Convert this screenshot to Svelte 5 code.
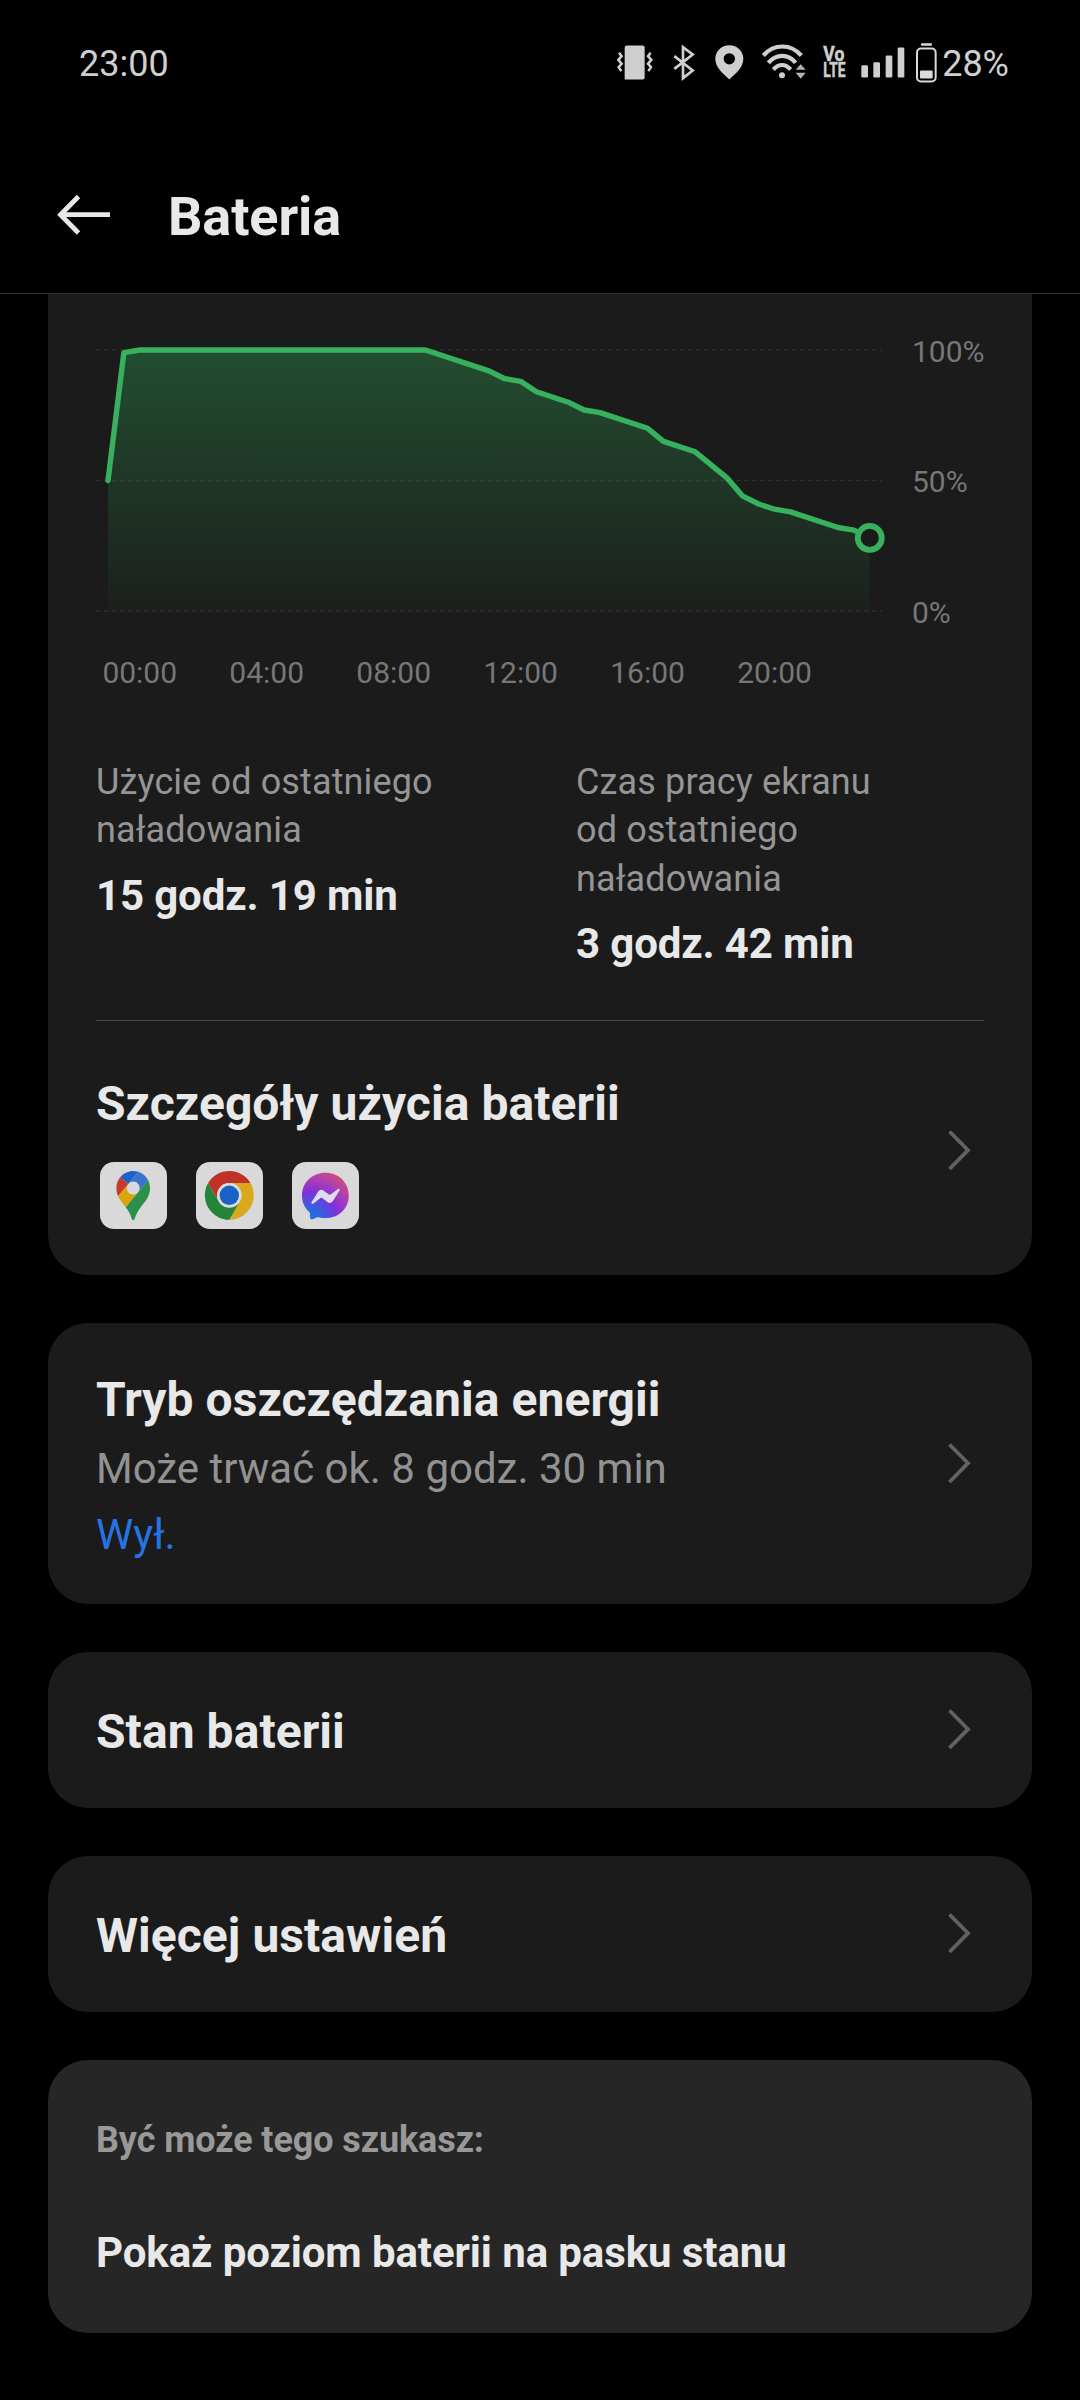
<script>
    // [half-hour slot, battery level in %]
    const history = [
        [0, 50], [1, 99], [2, 100], [20, 100], [24, 92], [25, 89], [26, 88], [27, 84],
        [29, 80], [30, 77], [31, 76], [34, 70], [35, 65], [37, 61], [39, 51], [40, 44],
        [41, 41], [42, 39], [43, 38], [46, 32], [47, 31], [48, 28]
    ];
    const hours = ['00:00', '04:00', '08:00', '12:00', '16:00', '20:00'];
    const levels = [100, 50, 0];

    const stats = [
        { label: 'Użycie od ostatniego\nnaładowania', value: '15 godz. 19 min' },
        { label: 'Czas pracy ekranu\nod ostatniego\nnaładowania', value: '3 godz. 42 min' }
    ];

    const links = ['Stan baterii', 'Więcej ustawień'];

    const x = (slot) => 12 + slot * 15.87;
    const y = (level) => 56 + (100 - level) * 2.61;

    const line = history.map(([s, l]) => `${x(s)},${y(l)}`).join(' ');
    const area = `${x(0)},${y(0)} ${line} ${x(48)},${y(0)}`;
</script>

{#snippet chevron()}
    <svg class="chevron" width="28" height="44" viewBox="0 0 28 44">
        <path d="M3.5 2.500 L22 21.200 L3.5 40" fill="none" stroke="#626262" stroke-width="3.8" />
    </svg>
{/snippet}

<div class="screen">
    <div class="status">
        <span class="clock">23:00</span>
        <div class="status-icons">
            <svg width="38.67" height="42" viewBox="50 37.5 116 126">
                <path d="M80 45h47a6 6 0 0 1 6 6v90a6 6 0 0 1-6 6H73V52a7 7 0 0 1 7-7z" fill="#cfcfcf" />
                <path d="M56 67l8 10-10 11 10 12-9 10 8 12M151 67l-8 10 10 11-10 12 9 10-8 12" fill="none" stroke="#cfcfcf" stroke-width="7.5" />
            </svg>
            <svg width="26.33" height="42" viewBox="208 37.5 79 126">
                <path d="M221 77l55 43-29 23V50l29 22-55 43" fill="none" stroke="#cfcfcf" stroke-width="8" />
            </svg>
            <svg width="37.67" height="42" viewBox="329 37.5 113 126">
                <path fill-rule="evenodd" d="M387 44c-24 0-42 18-42 41 0 26 22 43 42 62 20-19 42-36 42-62 0-23-18-41-42-41zm0 24a17 17 0 1 1 0 34 17 17 0 0 1 0-34z" fill="#cfcfcf" />
            </svg>
            <svg width="45.67" height="42" viewBox="484 37.5 137 126">
                <path d="M488 75c32-36 82-36 114 0M503 97c24-28 60-28 82 0M518 117c16-18 36-18 52 0" fill="none" stroke="#cfcfcf" stroke-width="12.5" />
                <circle cx="544" cy="134" r="9" fill="#cfcfcf" />
                <path d="M585 118l15-17 15 17zM585 127h30l-15 18z" fill="#b4b4b4" />
            </svg>
            <svg class="volte" width="24.67" height="42" viewBox="663 37.5 74 126">
                <text x="667" y="92" textLength="63" lengthAdjust="spacingAndGlyphs">Vo</text>
                <text x="667" y="140" textLength="67" lengthAdjust="spacingAndGlyphs">LTE</text>
            </svg>
            <svg width="41.33" height="42" viewBox="779 37.5 124 126" fill="#cfcfcf">
                <rect x="783" y="104" width="20" height="37" rx="4" />
                <rect x="819" y="95" width="20" height="46" rx="4" />
                <rect x="856" y="75" width="20" height="66" rx="4" />
                <rect x="892" y="51" width="20" height="90" rx="4" />
            </svg>
            <div class="battery">
                <svg width="20.67" height="42" viewBox="945 37.5 62 126">
                    <rect x="960" y="38.5" width="33" height="7" rx="3" fill="#dadada" />
                    <rect x="948" y="54" width="56" height="99" rx="12" fill="none" stroke="#dadada" stroke-width="6" />
                    <rect x="957" y="120" width="38" height="24" rx="3" fill="#dadada" />
                </svg>
                <span>28%</span>
            </div>
        </div>
    </div>

    <header>
        <svg width="56" height="44" viewBox="0 0 56 44">
            <path d="M22.500 1.500 L4.500 19.700 L22.500 38 M5 19.700 H54" fill="none" stroke="#e8e8e8" stroke-width="4.8" />
        </svg>
        <h1>Bateria</h1>
    </header>

    <main>
        <section class="card first">
            <svg class="chart" width="888" height="464" viewBox="0 0 888 464">
                <defs>
                    <linearGradient id="fill" x1="0" y1="0" x2="0" y2="1">
                        <stop offset="0" stop-color="#30b45c" stop-opacity="0.33" />
                        <stop offset="1" stop-color="#30b45c" stop-opacity="0.03" />
                    </linearGradient>
                </defs>
                {#each levels as level}
                    <line x1="0" x2="786" y1={y(level)} y2={y(level)} class="grid" />
                    <text x="816" y={y(level) + 11.5}>{level}%</text>
                {/each}
                <polygon points={area} fill="url(#fill)" />
                <polyline points={line} class="level" />
                <circle cx={x(48)} cy={y(28)} r="12" class="now" />
                {#each hours as hour, i}
                    <text x={x(2 + i * 8)} y="389" text-anchor="middle">{hour}</text>
                {/each}
            </svg>

            <div class="stats">
                {#each stats as stat}
                    <div>
                        <p class="stat-label">{stat.label}</p>
                        <p class="stat-value">{stat.value}</p>
                    </div>
                {/each}
            </div>

            <div class="row details">
                <div>
                    <h2>Szczegóły użycia baterii</h2>
                    <div class="apps">
                        <svg width="67" height="67" viewBox="0 0 67 67">
                            <g transform="translate(16.4 9) scale(.364 .37)">
                                <path fill="#1a63c9" d="M60.2 2.2C55.800.8 51 0 46.100 0 32 0 19.300 6.400 10.800 16.500l21.800 18.300L60.200 2.200z" />
                                <path fill="#c93a2e" d="M10.800 16.500C4.100 24.500 0 34.900 0 46.100c0 8.700 1.700 15.700 4.600 22l28-33.300-21.800-18.300z" />
                                <path fill="#3a74d0" d="M46.200 28.500c9.800 0 17.700 7.900 17.700 17.700 0 4.300-1.600 8.300-4.200 11.400 0 0 13.900-16.600 27.500-32.700-5.600-10.800-15.300-19-27-22.700L32.600 34.800c3.300-3.800 8.100-6.300 13.600-6.300" />
                                <path fill="#d9a40c" d="M46.200 63.800c-9.800 0-17.700-7.900-17.700-17.700 0-4.300 1.500-8.300 4.100-11.300l-28 33.300c4.800 10.600 12.800 19.200 21 29.900l34.100-40.500c-3.300 3.900-8.100 6.300-13.500 6.300" />
                                <path fill="#2c9148" d="M59.100 109.200c15.400-24.100 33.300-35 33.300-63 0-7.700-1.900-14.900-5.200-21.300L25.600 98c2.600 3.400 5.300 7.300 7.900 11.300 9.400 14.500 6.800 23.100 12.800 23.100s3.400-8.700 12.800-23.200" />
                            </g>
                        </svg>
                        <svg width="67" height="67" viewBox="-33.3 -33.3 67 67">
                            <path fill="#c03228" d="M-21.200-12.200A24.500 24.500 0 0 1 21.200-12.200H0A12.200 12.200 0 0 0-10.600 6.100z" />
                            <path fill="#d9a81c" d="M21.200-12.200A24.500 24.500 0 0 1 0 24.500L10.600 6.100A12.200 12.200 0 0 0 0-12.200z" />
                            <path fill="#23843c" d="M0 24.500A24.500 24.500 0 0 1-21.200-12.200L-10.600 6.100A12.200 12.200 0 0 0 10.600 6.100z" />
                            <circle r="12.200" fill="#dcdcdc" />
                            <circle r="9.700" fill="#1a62c6" />
                        </svg>
                        <svg width="67" height="67" viewBox="0 0 67 67">
                            <defs>
                                <radialGradient id="msg" gradientUnits="userSpaceOnUse" cx="18" cy="58" r="56">
                                    <stop offset="0" stop-color="#0f7be0" />
                                    <stop offset="0.18" stop-color="#2a68e0" />
                                    <stop offset="0.5" stop-color="#8030dc" />
                                    <stop offset="0.75" stop-color="#b040b0" />
                                    <stop offset="1" stop-color="#dc5262" />
                                </radialGradient>
                            </defs>
                            <path fill="url(#msg)" d="M33.500 10.700C20 10.700 10 20.500 10 33.500c0 6.800 2.700 12.500 7.300 16.600.4.400.6.900.6 1.500l.2 4.100c0 1.300 1.300 2.100 2.500 1.600l4.600-2c.4-.2.800-.2 1.200-.1 2.200.6 4.600.9 7.100.9 13.400 0 23.300-9.700 23.300-22.600S46.900 10.700 33.500 10.700z" />
                            <path fill="#e0dcea" d="M19.500 40.200l6.900-10.900c1.100-1.700 3.400-2.200 5-.9l5.500 4.100c.5.400 1.200.4 1.700 0l7.400-5.600c1-.7 2.300.4 1.600 1.500l-6.900 10.900c-1.100 1.700-3.400 2.200-5 .9l-5.500-4.100c-.5-.4-1.200-.4-1.700 0l-7.400 5.600c-1 .7-2.300-.4-1.600-1.500z" />
                        </svg>
                    </div>
                </div>
                {@render chevron()}
            </div>
        </section>

        <section class="card row saver">
            <div>
                <h2>Tryb oszczędzania energii</h2>
                <p class="hint">Może trwać ok. 8 godz. 30 min</p>
                <p class="hint state">Wył.</p>
            </div>
            {@render chevron()}
        </section>

        {#each links as link}
            <section class="card row link">
                <h2>{link}</h2>
                {@render chevron()}
            </section>
        {/each}

        <section class="card suggest">
            <p class="suggest-title">Być może tego szukasz:</p>
            <p class="suggest-item">Pokaż poziom baterii na pasku stanu</p>
        </section>
    </main>
</div>

<style>
    :global(body) { background: #000; }

    .screen {
        width: 1080px;
        height: 2400px;
        overflow: hidden;
        background: #000;
        color: #e8e8e8;
        font-family: Roboto, "Liberation Sans", sans-serif;
    }

    h1, h2, p { margin: 0; }
    svg { display: block; flex-shrink: 0; overflow: visible; }

    .status {
        height: 127px;
        display: flex;
        align-items: center;
        justify-content: space-between;
        padding: 0 71px 0 79px;
        box-sizing: border-box;
        font-size: 36px;
        color: #cfcfcf;
    }
    .status-icons { display: flex; align-items: center; gap: 14px; }
    .battery { display: flex; align-items: center; gap: 6px; }
    .volte text { font-size: 59px; font-weight: 700; fill: #cfcfcf; stroke: #cfcfcf; stroke-width: 1.5; }

    header {
        height: 167px;
        box-sizing: border-box;
        padding: 13px 56px 0;
        display: flex;
        align-items: center;
        gap: 56px;
        border-bottom: 1px solid #333;
    }
    h1 { font-size: 54px; line-height: 64px; font-weight: 700; letter-spacing: -0.1px; }

    main { display: flex; flex-direction: column; gap: 48px; padding: 0 48px; }

    .card { background: #1b1b1b; border-radius: 40px; padding: 0 48px; }
    .first { border-radius: 0 0 40px 40px; }

    .chart text { font-size: 30px; fill: #777; }
    .grid { stroke: #2c2c2c; stroke-width: 1.5; stroke-dasharray: 5 3; }
    .level { fill: none; stroke: #38b15f; stroke-width: 5.4; stroke-linejoin: round; stroke-linecap: round; }
    .now { fill: #1b1b1b; stroke: #38b15f; stroke-width: 5.8; }

    .stats { display: grid; grid-template-columns: 480px 408px; padding-bottom: 52px; border-bottom: 1px solid #454545; }
    .stat-label { font-size: 36px; line-height: 48.4px; letter-spacing: 0.13px; color: #959595; white-space: pre-line; }
    .stat-value { font-size: 42px; line-height: 48px; font-weight: 700; letter-spacing: -0.13px; margin-top: 17px; }

    .row { display: flex; align-items: center; justify-content: space-between; }
    .chevron { margin-right: 10px; }
    h2 { font-size: 48px; line-height: 56px; font-weight: 700; letter-spacing: 0.06px; padding-top: 3px; }

    .details { padding: 52px 0 46px; }
    .apps { display: flex; gap: 29px; margin: 30px 0 0 4px; }
    .apps svg { background: #d9d9d9; border-radius: 14px; }

    .saver { padding-top: 44px; padding-bottom: 44px; }
    .saver h2 { margin-top: 2px; }
    .hint { font-size: 42px; line-height: 50px; margin-top: 16px; color: #929292; }
    .state { color: #2673e4; }

    .link { padding-top: 48.5px; padding-bottom: 48.5px; }

    .suggest { background: #262626; padding-top: 57.5px; padding-bottom: 55.5px; }
    .suggest-title { font-size: 36px; line-height: 44px; font-weight: 700; letter-spacing: -0.1px; color: #999; }
    .suggest-item { font-size: 42px; line-height: 50px; font-weight: 700; letter-spacing: -0.1px; margin-top: 66px; }
</style>
